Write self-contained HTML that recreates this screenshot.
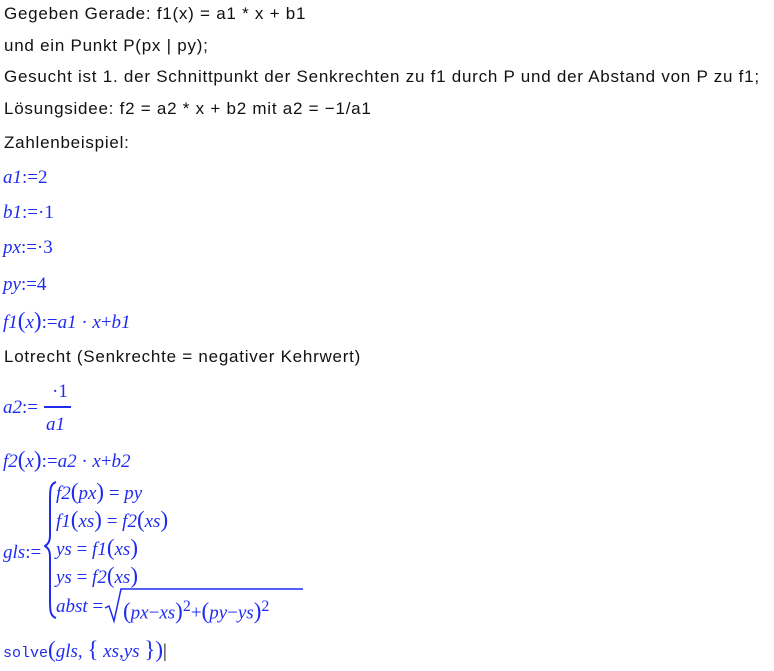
<!DOCTYPE html>
<html><head><meta charset="utf-8"><style>
body{margin:0;width:774px;height:671px;background:#fff;position:relative;overflow:hidden}
.t{position:absolute;left:4px;font:17px "Liberation Sans",sans-serif;letter-spacing:0.75px;color:#111;white-space:nowrap;line-height:20px}
.m{position:absolute;font:italic 19px "Liberation Serif",serif;color:#1f2cf0;white-space:nowrap;line-height:22px}
.n{font-style:normal}
.p{font-style:normal;font-size:23px}
</style></head><body>
<div class="t" style="top:4px">Gegeben Gerade: f1(x) = a1 * x + b1</div>
<div class="t" style="top:36px">und ein Punkt P(px | py);</div>
<div class="t" style="top:67px">Gesucht ist 1. der Schnittpunkt der Senkrechten zu f1 durch P und der Abstand von P zu f1;</div>
<div class="t" style="top:99px">Lösungsidee: f2 = a2 * x + b2 mit a2 = −1/a1</div>
<div class="t" style="top:133px">Zahlenbeispiel:</div>
<div class="m" style="left:3px;top:167px">a1<span class="n">:=2</span></div>
<div class="m" style="left:3px;top:202px">b1<span class="n">:=·1</span></div>
<div class="m" style="left:3px;top:237px">px<span class="n">:=·3</span></div>
<div class="m" style="left:3px;top:274px">py<span class="n">:=4</span></div>
<div class="m" style="left:3px;top:310px">f1<span class="p">(</span>x<span class="p">)</span><span class="n">:=</span>a1<span class="n"> · </span>x<span class="n">+</span>b1</div>
<div class="t" style="top:347px">Lotrecht (Senkrechte = negativer Kehrwert)</div>
<div class="m" style="left:3px;top:397px">a2<span class="n">:=</span></div>
<div class="m n" style="left:52px;top:381px;font-style:normal">·1</div>
<div style="position:absolute;left:44px;top:406px;width:27px;height:2px;background:#1f2cf0"></div>
<div class="m" style="left:46px;top:414px">a1</div>
<div class="m" style="left:3px;top:449px">f2<span class="p">(</span>x<span class="p">)</span><span class="n">:=</span>a2<span class="n"> · </span>x<span class="n">+</span>b2</div>
<div class="m" style="left:3px;top:542px">gls<span class="n">:=</span></div>
<svg style="position:absolute;left:44px;top:480px" width="14" height="140"><path d="M12 2 C6 4 6 10 6 20 L6 55 C6 62 4 64 1 66 C4 68 6 70 6 77 L6 120 C6 130 6 136 12 138" fill="none" stroke="#1f2cf0" stroke-width="2"/></svg>
<div class="m" style="left:56px;top:481px">f2<span class="p">(</span>px<span class="p">)</span><span class="n"> = </span>py</div>
<div class="m" style="left:56px;top:509px">f1<span class="p">(</span>xs<span class="p">)</span><span class="n"> = </span>f2<span class="p">(</span>xs<span class="p">)</span></div>
<div class="m" style="left:56px;top:537px">ys<span class="n"> = </span>f1<span class="p">(</span>xs<span class="p">)</span></div>
<div class="m" style="left:56px;top:565px">ys<span class="n"> = </span>f2<span class="p">(</span>xs<span class="p">)</span></div>
<div class="m" style="left:56px;top:596px">abst<span class="n"> = </span></div>
<svg style="position:absolute;left:104px;top:586px" width="200" height="38"><path d="M1 22 L5 20 L10 35 L17 3 L199 3" fill="none" stroke="#1f2cf0" stroke-width="1.5"/></svg>
<div class="m" style="left:123px;top:596px"><span class="p">(</span>px<span class="n">−</span>xs<span class="p">)</span><sup class="n" style="font-size:16px">2</sup><span class="n">+</span><span class="p">(</span>py<span class="n">−</span>ys<span class="p">)</span><sup class="n" style="font-size:16px">2</sup></div>
<div class="m" style="left:3px;top:639px"><span class="n" style="font-family:'Liberation Mono',monospace;font-size:15px">solve</span><span class="p">(</span>gls<span class="n">, </span><span class="p">{</span> xs<span class="n">,</span>ys <span class="p">}</span><span class="p">)</span><span class="n" style="color:#000">|</span></div>
</body></html>
